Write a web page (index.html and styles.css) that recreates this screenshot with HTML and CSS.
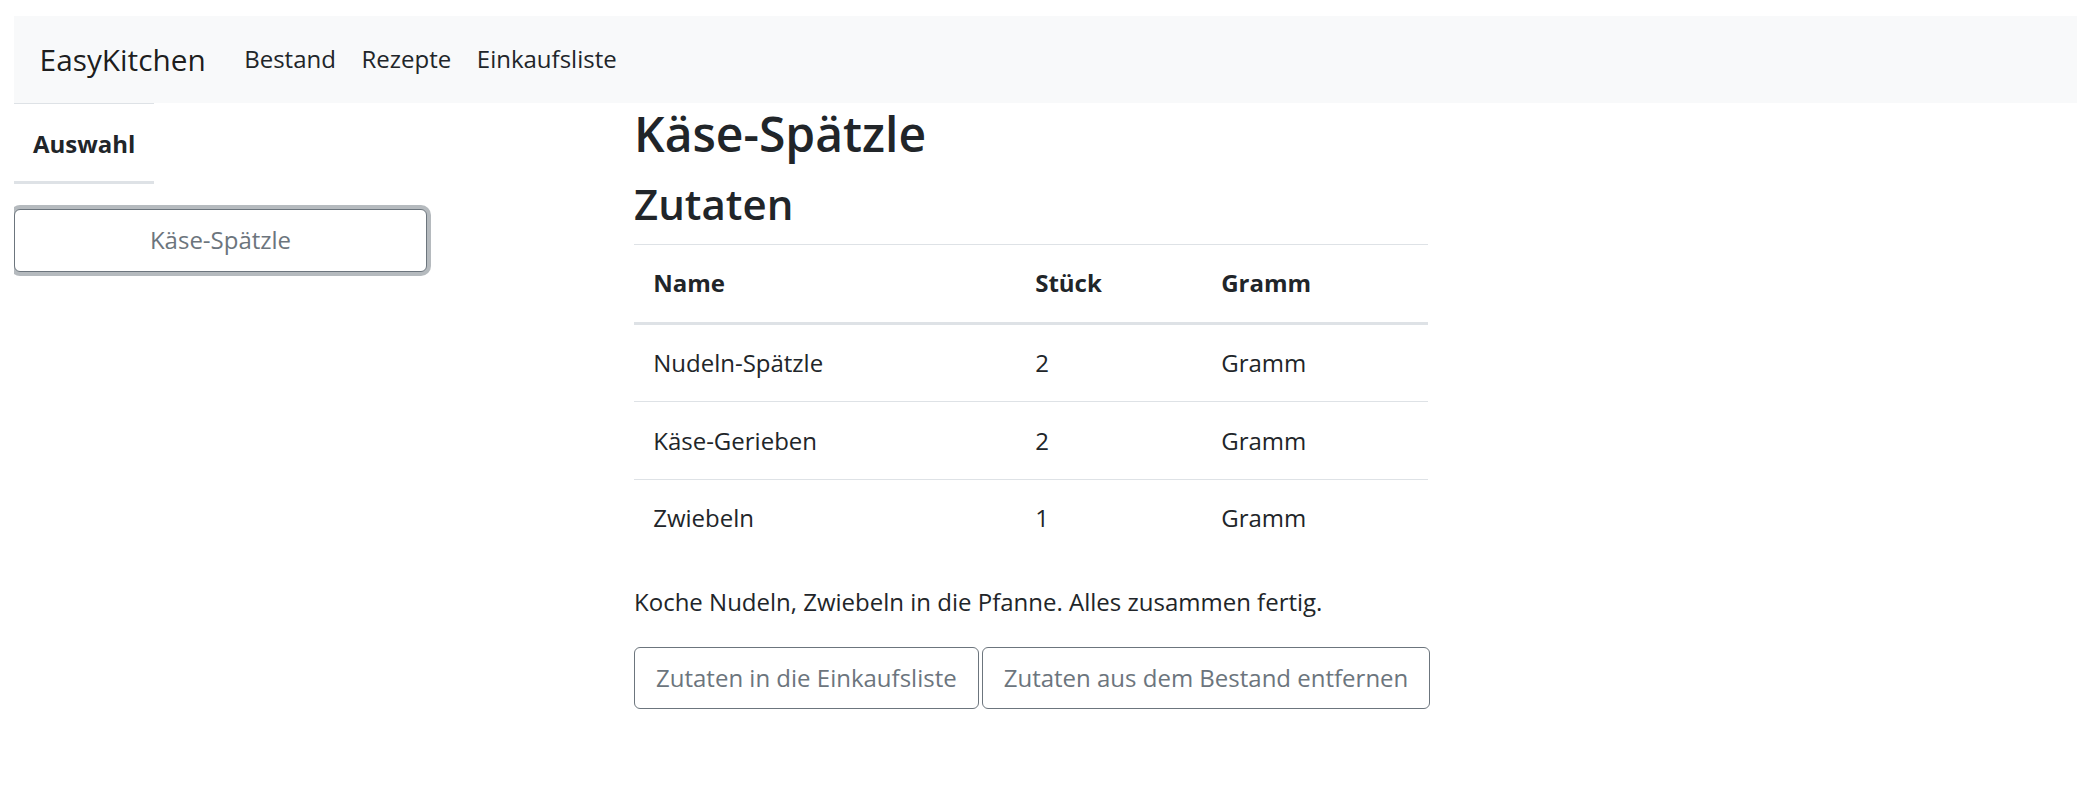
FILE: index.html
```html
<!DOCTYPE html>
<html lang="de">
<head>
<meta charset="utf-8">
<title>EasyKitchen</title>
<link rel="stylesheet" href="styles.css">
</head>
<body>
<div class="page">
  <nav class="navbar">
    <a class="brand" href="#">EasyKitchen</a>
    <ul class="nav-links">
      <li><a class="nav-link" href="#">Bestand</a></li>
      <li><a class="nav-link" href="#">Rezepte</a></li>
      <li><a class="nav-link" href="#">Einkaufsliste</a></li>
    </ul>
  </nav>
  <div class="content">
    <aside class="sidebar">
      <div class="tab">Auswahl</div>
      <button class="btn btn-recipe" type="button">Käse-Spätzle</button>
    </aside>
    <main class="main">
      <h2 class="title">Käse-Spätzle</h2>
      <h3 class="subtitle">Zutaten</h3>
      <table class="table">
        <thead>
          <tr>
            <th class="col-name">Name</th>
            <th class="col-count">Stück</th>
            <th class="col-gram">Gramm</th>
          </tr>
        </thead>
        <tbody>
          <tr><td>Nudeln-Spätzle</td><td>2</td><td>Gramm</td></tr>
          <tr><td>Käse-Gerieben</td><td>2</td><td>Gramm</td></tr>
          <tr><td>Zwiebeln</td><td>1</td><td>Gramm</td></tr>
        </tbody>
      </table>
      <p class="desc">Koche Nudeln, Zwiebeln in die Pfanne. Alles zusammen fertig.</p>
      <div class="actions">
        <button class="btn" type="button">Zutaten in die Einkaufsliste</button>
        <button class="btn" type="button">Zutaten aus dem Bestand entfernen</button>
      </div>
    </main>
  </div>
</div>
</body>
</html>
```

FILE: styles.css
```css
* { box-sizing: border-box; }

body {
  margin: 0;
  font-family: "Open Sans", "Noto Sans", sans-serif;
  font-size: 24px;
  line-height: 38.4px;
  color: #212529;
  background: #fff;
}

.page {
  padding: 16px 17px 0 14px;
}

.navbar {
  height: 87px;
  background: #f8f9fa;
  display: flex;
  align-items: center;
  padding: 0 25.6px;
}

.brand {
  font-size: 29.8px;
  line-height: 48px;
  color: rgba(0, 0, 0, 0.9);
  text-decoration: none;
  margin-right: 25.6px;
}

.nav-links {
  display: flex;
  list-style: none;
  margin: 0;
  padding: 0;
}

.nav-link {
  display: block;
  padding: 0 12.8px;
  color: #212529;
  text-decoration: none;
}

.content {
  display: grid;
  grid-template-columns: 620px 794px;
  align-items: start;
}

.sidebar {
  display: flex;
  flex-direction: column;
  align-items: flex-start;
}

.tab {
  border-top: 1px solid #dee2e6;
  border-bottom: 3px solid #dee2e6;
  padding: 21px 19px 18px;
  font-weight: 700;
}

.btn {
  font-family: inherit;
  font-size: 24px;
  line-height: 38.4px;
  color: #6c757d;
  background: #fff;
  border: 1px solid #6c757d;
  border-radius: 6px;
  padding: 11px 21px;
  white-space: nowrap;
  flex-shrink: 0;
  cursor: pointer;
}

.btn-recipe {
  margin-top: 25px;
  width: 413px;
  box-shadow: 0 0 0 4px rgba(108, 117, 125, 0.5);
  clip-path: inset(-5px -5px -5px 0);
}

.title {
  margin: 0 0 12.8px;
  font-size: 48px;
  line-height: 61.4px;
  font-weight: 600;
}

.subtitle {
  margin: 0 0 12.8px;
  font-size: 42px;
  line-height: 53.8px;
  font-weight: 600;
}

.table {
  width: 794px;
  border-collapse: collapse;
  margin-bottom: 25.6px;
}

.table th,
.table td {
  text-align: left;
  padding: 19.2px;
  border-top: 1px solid #dee2e6;
  vertical-align: top;
}

.table th {
  font-weight: 700;
  border-bottom: 3px solid #dee2e6;
}

.col-name { width: 382px; }
.col-count { width: 186px; }
.col-gram { width: 226px; }

.desc {
  margin: 0 0 25.6px;
}

.actions {
  display: flex;
  gap: 3px;
}
```
